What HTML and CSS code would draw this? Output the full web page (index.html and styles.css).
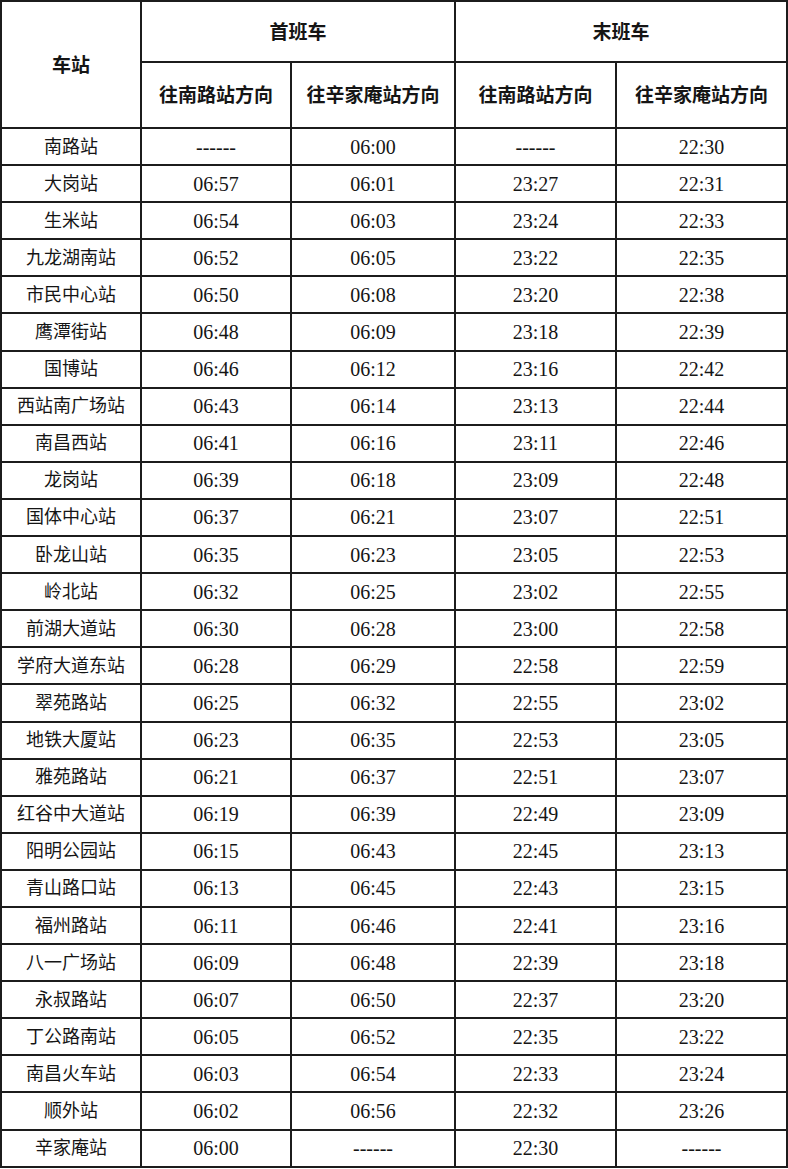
FILE: index.html
```html
<!DOCTYPE html>
<html lang="zh-CN">
<head>
<meta charset="utf-8">
<title>首末班车时刻表</title>
<link rel="stylesheet" href="styles.css">
</head>
<body>
<table class="timetable">
<colgroup>
<col class="c-station"><col class="c-a"><col class="c-b"><col class="c-c"><col class="c-d">
</colgroup>
<thead>
<tr class="h1">
<th rowspan="2">车站</th>
<th colspan="2">首班车</th>
<th colspan="2">末班车</th>
</tr>
<tr class="h2">
<th>往南路站方向</th>
<th>往辛家庵站方向</th>
<th>往南路站方向</th>
<th>往辛家庵站方向</th>
</tr>
</thead>
<tbody>
<tr><td>南路站</td><td>------</td><td>06:00</td><td>------</td><td>22:30</td></tr>
<tr><td>大岗站</td><td>06:57</td><td>06:01</td><td>23:27</td><td>22:31</td></tr>
<tr><td>生米站</td><td>06:54</td><td>06:03</td><td>23:24</td><td>22:33</td></tr>
<tr><td>九龙湖南站</td><td>06:52</td><td>06:05</td><td>23:22</td><td>22:35</td></tr>
<tr><td>市民中心站</td><td>06:50</td><td>06:08</td><td>23:20</td><td>22:38</td></tr>
<tr><td>鹰潭街站</td><td>06:48</td><td>06:09</td><td>23:18</td><td>22:39</td></tr>
<tr><td>国博站</td><td>06:46</td><td>06:12</td><td>23:16</td><td>22:42</td></tr>
<tr><td>西站南广场站</td><td>06:43</td><td>06:14</td><td>23:13</td><td>22:44</td></tr>
<tr><td>南昌西站</td><td>06:41</td><td>06:16</td><td>23:11</td><td>22:46</td></tr>
<tr><td>龙岗站</td><td>06:39</td><td>06:18</td><td>23:09</td><td>22:48</td></tr>
<tr><td>国体中心站</td><td>06:37</td><td>06:21</td><td>23:07</td><td>22:51</td></tr>
<tr><td>卧龙山站</td><td>06:35</td><td>06:23</td><td>23:05</td><td>22:53</td></tr>
<tr><td>岭北站</td><td>06:32</td><td>06:25</td><td>23:02</td><td>22:55</td></tr>
<tr><td>前湖大道站</td><td>06:30</td><td>06:28</td><td>23:00</td><td>22:58</td></tr>
<tr><td>学府大道东站</td><td>06:28</td><td>06:29</td><td>22:58</td><td>22:59</td></tr>
<tr><td>翠苑路站</td><td>06:25</td><td>06:32</td><td>22:55</td><td>23:02</td></tr>
<tr><td>地铁大厦站</td><td>06:23</td><td>06:35</td><td>22:53</td><td>23:05</td></tr>
<tr><td>雅苑路站</td><td>06:21</td><td>06:37</td><td>22:51</td><td>23:07</td></tr>
<tr><td>红谷中大道站</td><td>06:19</td><td>06:39</td><td>22:49</td><td>23:09</td></tr>
<tr><td>阳明公园站</td><td>06:15</td><td>06:43</td><td>22:45</td><td>23:13</td></tr>
<tr><td>青山路口站</td><td>06:13</td><td>06:45</td><td>22:43</td><td>23:15</td></tr>
<tr><td>福州路站</td><td>06:11</td><td>06:46</td><td>22:41</td><td>23:16</td></tr>
<tr><td>八一广场站</td><td>06:09</td><td>06:48</td><td>22:39</td><td>23:18</td></tr>
<tr><td>永叔路站</td><td>06:07</td><td>06:50</td><td>22:37</td><td>23:20</td></tr>
<tr><td>丁公路南站</td><td>06:05</td><td>06:52</td><td>22:35</td><td>23:22</td></tr>
<tr><td>南昌火车站</td><td>06:03</td><td>06:54</td><td>22:33</td><td>23:24</td></tr>
<tr><td>顺外站</td><td>06:02</td><td>06:56</td><td>22:32</td><td>23:26</td></tr>
<tr><td>辛家庵站</td><td>06:00</td><td>------</td><td>22:30</td><td>------</td></tr>
</tbody>
</table>
</body>
</html>
```

FILE: styles.css
```css
html, body {
  margin: 0;
  padding: 0;
  background: #ffffff;
}

.timetable {
  border-collapse: collapse;
  table-layout: fixed;
  width: 788px;
  font-family: "Liberation Serif", "Noto Sans CJK SC", serif;
  color: #151515;
}

.c-station { width: 140px; }
.c-a { width: 150px; }
.c-b { width: 164px; }
.c-c { width: 161px; }
.c-d { width: 171px; }

.timetable th,
.timetable td {
  border: 2px solid #1c1c1c;
  text-align: center;
  vertical-align: middle;
  padding: 0;
}

.timetable th {
  font-size: 19px;
  font-weight: 700;
  line-height: 20px;
  padding-top: 2px;
}

.h1 { height: 61px; }
.h2 { height: 66px; }

.timetable tbody tr {
  height: 37.1px;
}

.timetable td {
  font-size: 20px;
  line-height: 18px;
}

.timetable td:first-child {
  font-size: 18px;
}
```
